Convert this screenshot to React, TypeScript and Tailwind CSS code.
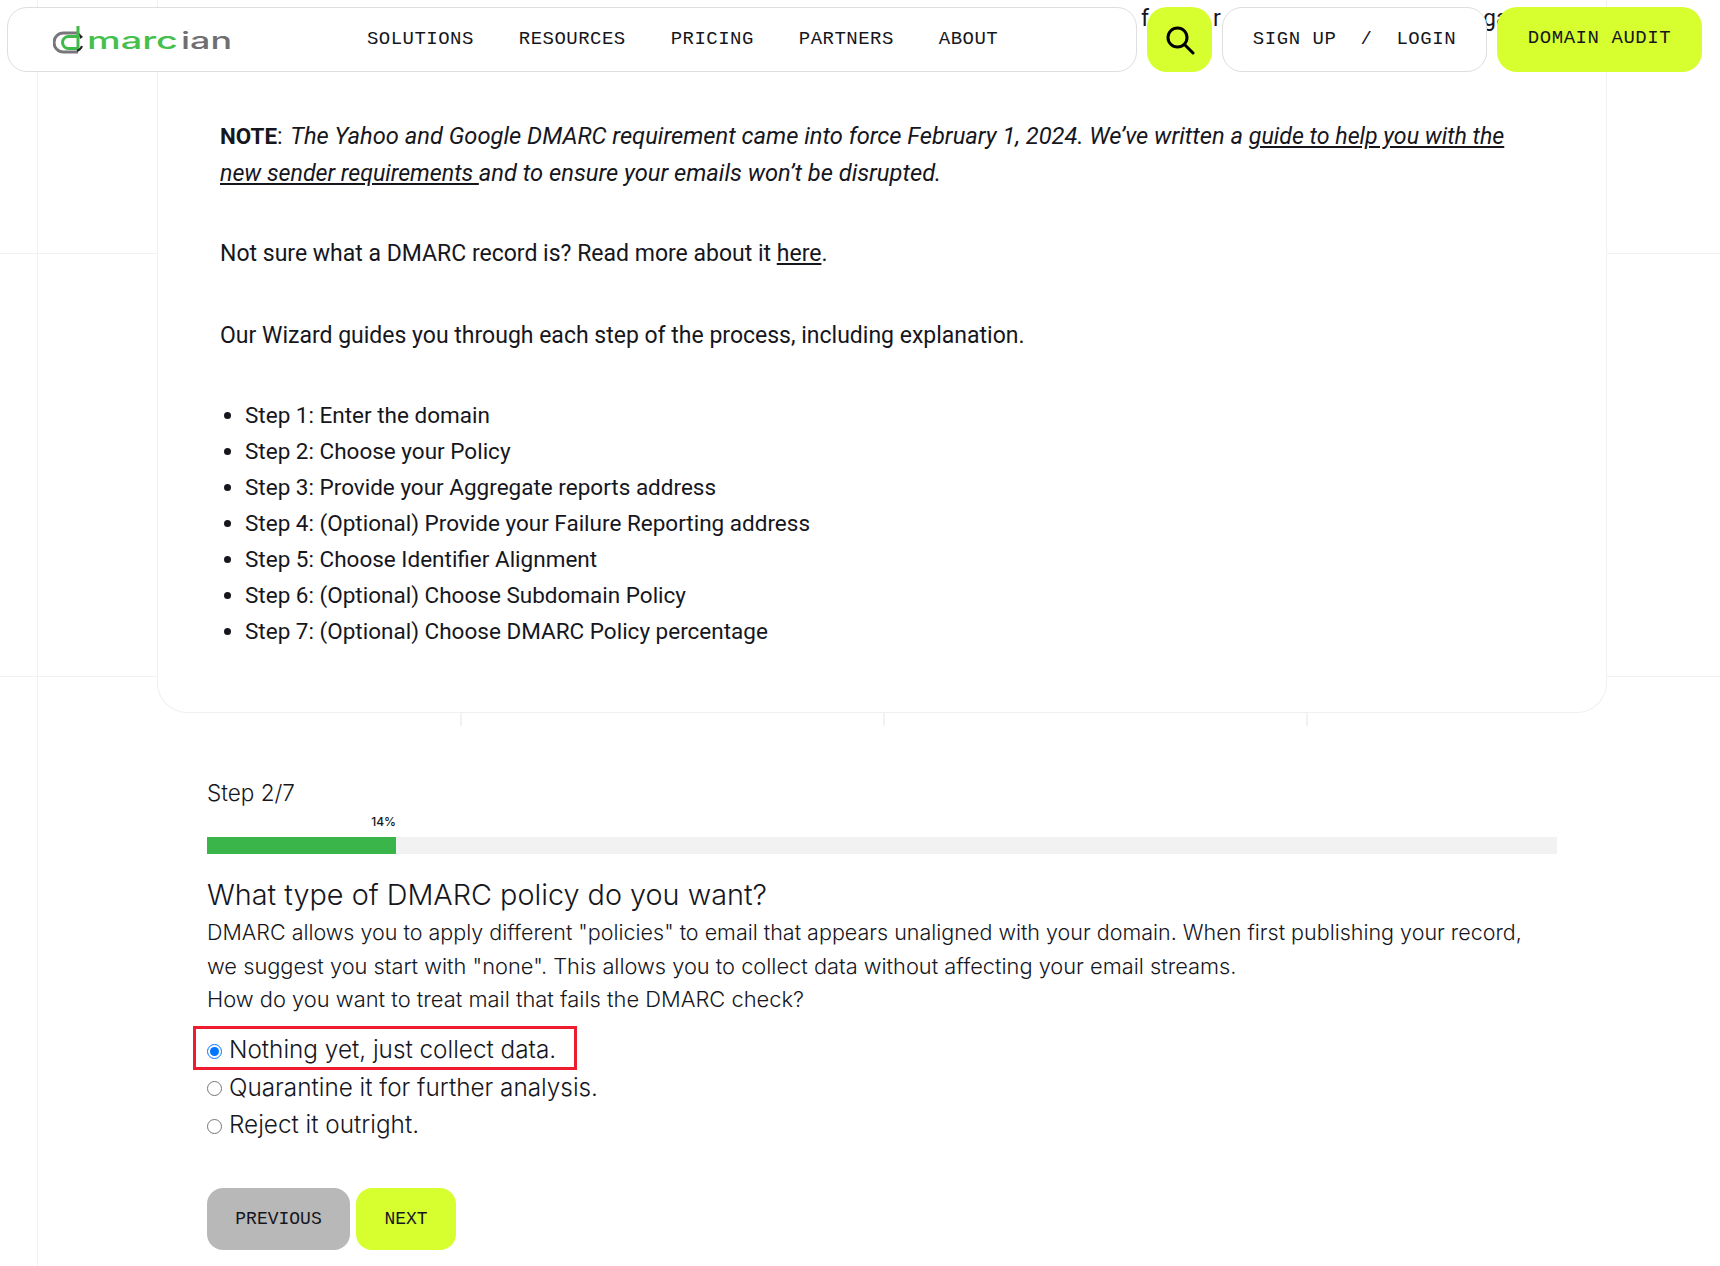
import React from 'react';

const steps = [
  'Step 1: Enter the domain',
  'Step 2: Choose your Policy',
  'Step 3: Provide your Aggregate reports address',
  'Step 4: (Optional) Provide your Failure Reporting address',
  'Step 5: Choose Identifier Alignment',
  'Step 6: (Optional) Choose Subdomain Policy',
  'Step 7: (Optional) Choose DMARC Policy percentage',
];

const navLinks = ['SOLUTIONS', 'RESOURCES', 'PRICING', 'PARTNERS', 'ABOUT'];

const mono = "font-['Liberation_Mono',monospace]";
const wizardFont = "font-['Inter',sans-serif]";

const Logo = () => (
  <svg width="180" height="36" viewBox="0 0 180 36" className="shrink-0">
    <path d="M25 11 H10.5 A9.5 9.5 0 0 0 10.5 30 H25" fill="none" stroke="#77777b" strokeWidth="3" />
    <path d="M25 4 V26.5 H15.5 A6 6 0 0 1 15.5 14.5 H25" fill="none" stroke="#3fb94a" strokeWidth="3" />
    <path d="M26 11 L30 15 L27 17 Z" fill="#222" />
    <path d="M29 24 A8 8 0 0 1 24 29" fill="none" stroke="#222" strokeWidth="2" />
    <text x="34" y="26.5" fontFamily="Inter, sans-serif" fontSize="24" fontWeight="500" fill="#45c04d" textLength="91" lengthAdjust="spacingAndGlyphs">marc</text>
    <text x="128" y="26.5" fontFamily="Inter, sans-serif" fontSize="24" fontWeight="500" fill="#6e6e73" textLength="51" lengthAdjust="spacingAndGlyphs">ian</text>
  </svg>
);

const Radio = ({ label, checked }: { label: string; checked?: boolean }) => (
  <label className="flex h-[37.5px] items-center">
    <input type="radio" name="policy" defaultChecked={checked} className="m-0 mr-[7px] mt-[4px] h-[15px] w-[15px] accent-[#0075ff]" />
    <span className="text-[24.3px] font-[350] text-[#16161d]">{label}</span>
  </label>
);

const App: React.FC = () => {
  return (
    <div className="relative h-[1266px] w-[1720px] overflow-hidden bg-white font-['Roboto',sans-serif] text-[#16161d]">
      {/* background grid lines */}
      <div className="absolute left-[37px] top-0 h-full w-px bg-[#f2f2f2]"></div>
      <div className="absolute left-0 top-[253px] h-px w-full bg-[#f2f2f2]"></div>
      <div className="absolute left-0 top-[676px] h-px w-full bg-[#f2f2f2]"></div>
      <div className="absolute left-[460px] top-[712px] h-[14px] w-[2px] bg-[#f2f2f2]"></div>
      <div className="absolute left-[883px] top-[712px] h-[14px] w-[2px] bg-[#f2f2f2]"></div>
      <div className="absolute left-[1306px] top-[712px] h-[14px] w-[2px] bg-[#f2f2f2]"></div>

      {/* bits of the scrolled paragraph peeking out between the nav pills */}
      <span className="absolute left-[1141px] top-[2px] z-[1] text-[23px]">f</span>
      <span className="absolute left-[1213px] top-[2px] z-[1] text-[23px]">r</span>
      <span className="absolute left-[1483px] top-[2px] z-[1] text-[23px]">ga</span>

      <header className="absolute left-[7px] top-[7px] z-10 flex h-[65px] items-stretch">
        <div className="flex w-[1130px] items-center rounded-[20px] border border-[#dedede] bg-white pl-[45px]">
          <Logo />
          <nav className={`ml-[134px] flex gap-[45px] text-[19px] tracking-[0.47px] ${mono}`}>
            {navLinks.map((link) => (
              <a key={link}>{link}</a>
            ))}
          </nav>
        </div>
        <button className="ml-[10px] flex w-[65px] items-center justify-center rounded-[20px] bg-[#d7ff30]">
          <svg width="30" height="30" viewBox="0 0 30 30" fill="none" stroke="#000" strokeWidth="3">
            <circle cx="12.5" cy="12.5" r="9.5" />
            <path d="M19.5 19.5 L28 28" strokeLinecap="round" />
          </svg>
        </button>
        <div className={`ml-[10px] flex w-[265px] items-center justify-center gap-[24px] rounded-[20px] border border-[#dedede] bg-white text-[19px] tracking-[0.55px] ${mono}`}>
          <a>SIGN UP</a>
          <span>/</span>
          <a>LOGIN</a>
        </div>
        <button className={`ml-[10px] w-[205px] rounded-[20px] bg-[#d7ff30] pb-[2px] text-[19px] tracking-[0.55px] ${mono}`}>
          DOMAIN AUDIT
        </button>
      </header>

      {/* article card */}
      <main className="relative ml-[157px] h-[713px] w-[1450px] rounded-b-[30px] border-x border-b border-[#f0f0f0] bg-white pl-[62px] pr-[100px] pt-[118px] text-[23px] leading-[36px]">
        <p>
          <strong className="text-[22.4px] font-bold">NOTE</strong>
          <span className="mr-[2px]">: </span>
          <em className="text-[23.7px]">The Yahoo and Google DMARC requirement came into force February 1, 2024. We’ve written a </em>
          <a className="text-[23.2px] italic underline">guide to help you with the new sender requirements </a>
          <em className="text-[23.7px]">and to ensure your emails won’t be disrupted.</em>
        </p>
        <p className="mt-[44px]">
          Not sure what a DMARC record is? Read more about it <a className="underline">here</a>.
        </p>
        <p className="mt-[46px]">Our Wizard guides you through each step of the process, including explanation.</p>
        <ul className="ml-[25px] mt-[43px] list-disc text-[22.5px]">
          {steps.map((step) => (
            <li key={step}>{step}</li>
          ))}
        </ul>
      </main>

      {/* wizard */}
      <section className={`ml-[207px] mt-[65px] w-[1350px] ${wizardFont}`}>
        <p className="text-[22.5px] font-[350] leading-[30px]">Step 2/7</p>
        <div className="mt-[6px] w-[189px] text-right text-[12px] font-medium leading-[16px]">14%</div>
        <div className="mt-[7px] h-[17px] bg-[#f2f2f2]">
          <div className="h-full w-[189px] bg-[#39b54a]"></div>
        </div>
        <h2 className="mt-[23px] text-[28.8px] font-[350] leading-[36px]">What type of DMARC policy do you want?</h2>
        <p className="mt-[3px] text-[21.5px] font-[350] leading-[33.5px]">
          DMARC allows you to apply different "policies" to email that appears unaligned with your domain. When first publishing your record,
          <br />
          <span className="text-[21.8px]">we suggest you start with "none". This allows you to collect data without affecting your email streams.</span>
        </p>
        <p className="text-[21.9px] font-[350] leading-[33.5px]">How do you want to treat mail that fails the DMARC check?</p>
        <div className="relative mt-[14px]">
          <div className="absolute left-[-14px] top-[-5px] h-[44px] w-[384px] border-[3px] border-[#ed1c2e]"></div>
          <Radio label="Nothing yet, just collect data." checked />
          <Radio label="Quarantine it for further analysis." />
          <Radio label="Reject it outright." />
        </div>
        <div className={`mt-[45px] flex gap-[6px] text-[18px] ${mono}`}>
          <button className="h-[62px] w-[143px] rounded-[16px] bg-[#b8b8b8]">PREVIOUS</button>
          <button className="h-[62px] w-[100px] rounded-[16px] bg-[#d7ff30]">NEXT</button>
        </div>
      </section>
    </div>
  );
};

export default App;
